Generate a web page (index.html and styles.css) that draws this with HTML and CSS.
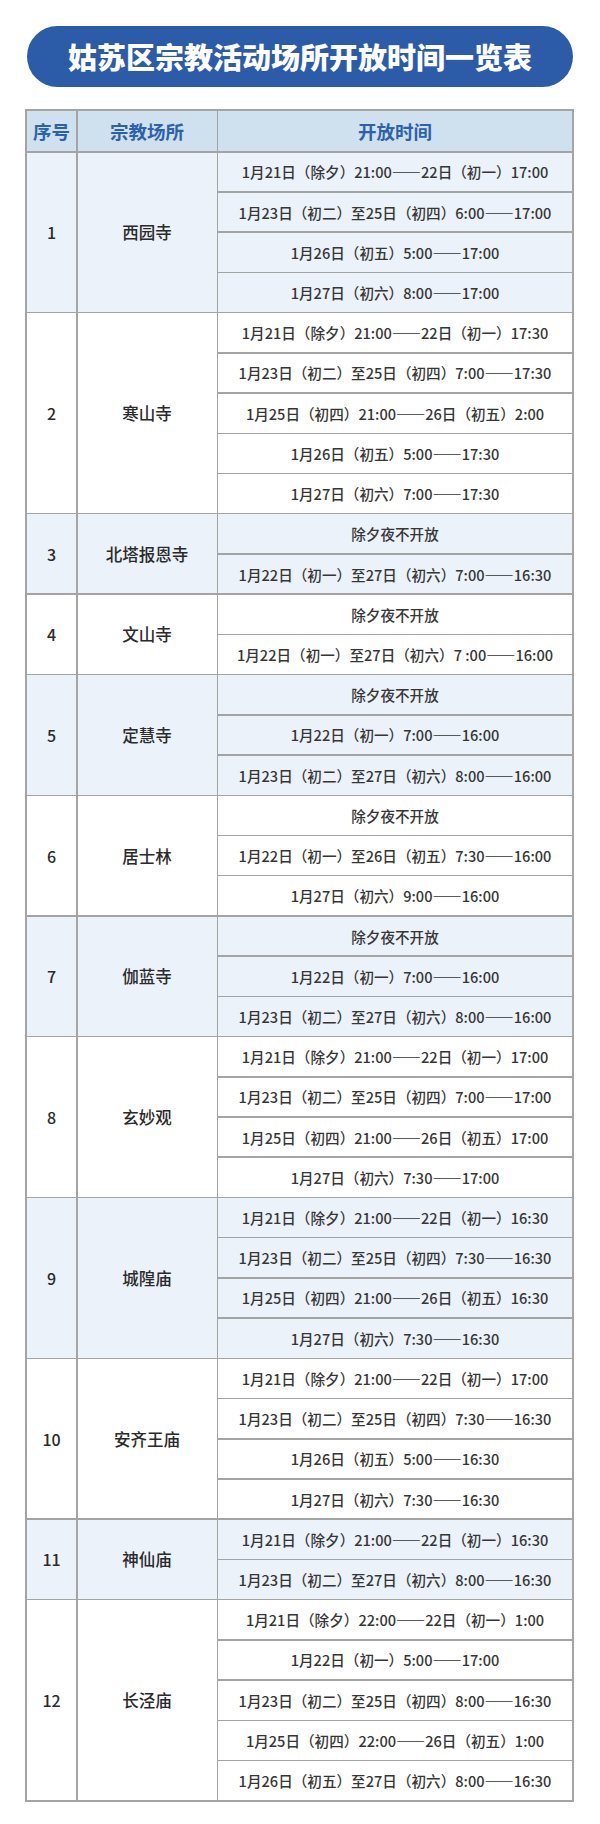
FILE: index.html
```html
<!DOCTYPE html>
<html lang="zh-CN">
<head>
<meta charset="utf-8">
<title>姑苏区宗教活动场所开放时间一览表</title>
<link rel="stylesheet" href="styles.css">
</head>
<body>
<div class="page">
  <h1 class="title">姑苏区宗教活动场所开放时间一览表</h1>
  <div class="table">
    <div class="th">序号</div>
    <div class="th">宗教场所</div>
    <div class="th">开放时间</div>

    <div class="c no blue span4">1</div>
    <div class="c name blue span4">西园寺</div>
    <div class="c t blue">1月21日（除夕）21:00——22日（初一）17:00</div>
    <div class="c t blue">1月23日（初二）至25日（初四）6:00——17:00</div>
    <div class="c t blue">1月26日（初五）5:00——17:00</div>
    <div class="c t blue">1月27日（初六）8:00——17:00</div>

    <div class="c no span5">2</div>
    <div class="c name span5">寒山寺</div>
    <div class="c t">1月21日（除夕）21:00——22日（初一）17:30</div>
    <div class="c t">1月23日（初二）至25日（初四）7:00——17:30</div>
    <div class="c t">1月25日（初四）21:00——26日（初五）2:00</div>
    <div class="c t">1月26日（初五）5:00——17:30</div>
    <div class="c t">1月27日（初六）7:00——17:30</div>

    <div class="c no blue span2">3</div>
    <div class="c name blue span2">北塔报恩寺</div>
    <div class="c t blue">除夕夜不开放</div>
    <div class="c t blue">1月22日（初一）至27日（初六）7:00——16:30</div>

    <div class="c no span2">4</div>
    <div class="c name span2">文山寺</div>
    <div class="c t">除夕夜不开放</div>
    <div class="c t">1月22日（初一）至27日（初六）7 :00——16:00</div>

    <div class="c no blue span3">5</div>
    <div class="c name blue span3">定慧寺</div>
    <div class="c t blue">除夕夜不开放</div>
    <div class="c t blue">1月22日（初一）7:00——16:00</div>
    <div class="c t blue">1月23日（初二）至27日（初六）8:00——16:00</div>

    <div class="c no span3">6</div>
    <div class="c name span3">居士林</div>
    <div class="c t">除夕夜不开放</div>
    <div class="c t">1月22日（初一）至26日（初五）7:30——16:00</div>
    <div class="c t">1月27日（初六）9:00——16:00</div>

    <div class="c no blue span3">7</div>
    <div class="c name blue span3">伽蓝寺</div>
    <div class="c t blue">除夕夜不开放</div>
    <div class="c t blue">1月22日（初一）7:00——16:00</div>
    <div class="c t blue">1月23日（初二）至27日（初六）8:00——16:00</div>

    <div class="c no span4">8</div>
    <div class="c name span4">玄妙观</div>
    <div class="c t">1月21日（除夕）21:00——22日（初一）17:00</div>
    <div class="c t">1月23日（初二）至25日（初四）7:00——17:00</div>
    <div class="c t">1月25日（初四）21:00——26日（初五）17:00</div>
    <div class="c t">1月27日（初六）7:30——17:00</div>

    <div class="c no blue span4">9</div>
    <div class="c name blue span4">城隍庙</div>
    <div class="c t blue">1月21日（除夕）21:00——22日（初一）16:30</div>
    <div class="c t blue">1月23日（初二）至25日（初四）7:30——16:30</div>
    <div class="c t blue">1月25日（初四）21:00——26日（初五）16:30</div>
    <div class="c t blue">1月27日（初六）7:30——16:30</div>

    <div class="c no span4">10</div>
    <div class="c name span4">安齐王庙</div>
    <div class="c t">1月21日（除夕）21:00——22日（初一）17:00</div>
    <div class="c t">1月23日（初二）至25日（初四）7:30——16:30</div>
    <div class="c t">1月26日（初五）5:00——16:30</div>
    <div class="c t">1月27日（初六）7:30——16:30</div>

    <div class="c no blue span2">11</div>
    <div class="c name blue span2">神仙庙</div>
    <div class="c t blue">1月21日（除夕）21:00——22日（初一）16:30</div>
    <div class="c t blue">1月23日（初二）至27日（初六）8:00——16:30</div>

    <div class="c no span5">12</div>
    <div class="c name span5">长泾庙</div>
    <div class="c t">1月21日（除夕）22:00——22日（初一）1:00</div>
    <div class="c t">1月22日（初一）5:00——17:00</div>
    <div class="c t">1月23日（初二）至25日（初四）8:00——16:30</div>
    <div class="c t">1月25日（初四）22:00——26日（初五）1:00</div>
    <div class="c t">1月26日（初五）至27日（初六）8:00——16:30</div>
  </div>
</div>
</body>
</html>
```

FILE: styles.css
```css
* { box-sizing: border-box; }
html, body { margin: 0; padding: 0; background: #ffffff; }
body {
  font-family: "Noto Sans CJK SC", "Noto Sans", sans-serif;
  color: #333333;
}
.page {
  width: 600px;
  padding: 26px 26px 0 25px;
}
.title {
  margin: 0 0 22px 2px;
  width: 546px;
  height: 61px;
  border-radius: 31px;
  background: #2c5ba8;
  color: #ffffff;
  font-size: 29px;
  font-weight: 900;
  line-height: 61px;
  text-align: center;
}
.table {
  width: 549px;
  display: grid;
  grid-template-columns: 49px 139px 1fr;
  grid-template-rows: 40px;
  grid-auto-rows: 38.72px;
  gap: 1.5px;
  padding: 2px;
  background: #a4a4a4;
}
.th {
  background: #cfe0ee;
  color: #2d62a9;
  font-size: 18.5px;
  font-weight: 700;
  display: flex;
  align-items: center;
  justify-content: center;
}
.c {
  background: #ffffff;
  display: flex;
  align-items: center;
  justify-content: center;
  white-space: nowrap;
}
.c.blue { background: #ebf2fa; }
.no { font-size: 16px; font-weight: 500; color: #2a2a2a; }
.name { font-size: 16.5px; font-weight: 500; color: #2a2a2a; }
.t { font-size: 14.6px; font-weight: 500; color: #363636; }
.span2 { grid-row: span 2; }
.span3 { grid-row: span 3; }
.span4 { grid-row: span 4; }
.span5 { grid-row: span 5; }
```
